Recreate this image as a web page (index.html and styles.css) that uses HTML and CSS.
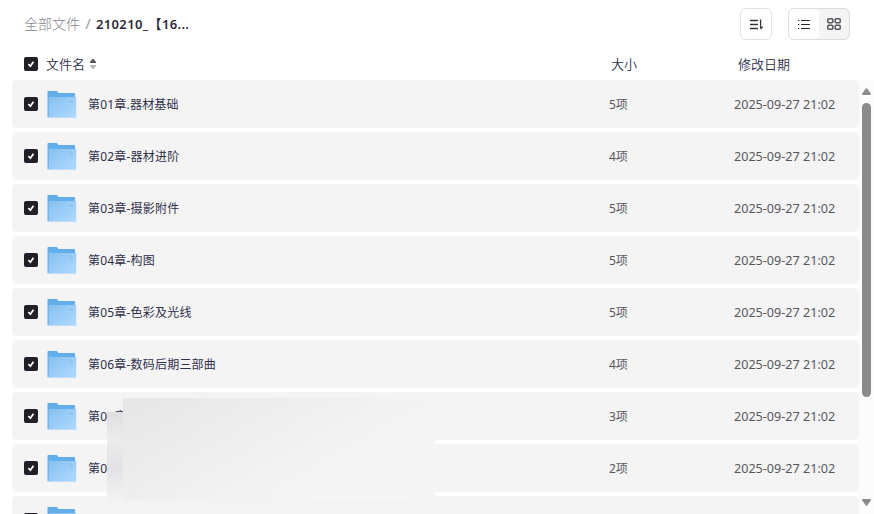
FILE: index.html
```html
<!DOCTYPE html>
<html lang="zh-CN">
<head>
<meta charset="utf-8">
<title>全部文件</title>
<link rel="stylesheet" href="styles.css">
</head>
<body>
<svg class="defs" aria-hidden="true">
  <defs>
    <linearGradient id="front" x1="0" y1="0" x2="1" y2="1"><stop offset="0" stop-color="#86c0f1"/><stop offset=".5" stop-color="#9bcdf7"/><stop offset="1" stop-color="#afd9fc"/></linearGradient>
    <symbol id="folder" viewBox="0 0 30 28">
      <path d="M.5 1.8Q.5 1 1.3 1H9.5Q10.3 1 10.8 2L11.3 3H27.2Q28 3 28 3.8V27H.5Z" fill="#62aeeb"/>
      <path d="M1.7 7H29.2V27.5H1.7Z" fill="url(#front)"/>
      <path d="M.5 27.4H29" stroke="#b5dafa" stroke-width=".8"/>
      <path d="M22.5 11.8H26" stroke="#83bff0" stroke-width="1.5"/>
    </symbol>
    <symbol id="check" viewBox="0 0 14 14">
      <path d="M4.4 7.1 6.4 9.1 9.5 4.7" fill="none" stroke="#fff" stroke-width="1.7"/>
    </symbol>
  </defs>
</svg>
<div class="app">
  <header class="toolbar">
    <nav class="crumbs"><span class="root">全部文件</span><span class="slash">/</span><span class="current">210210_【16...</span></nav>
    <div class="actions">
      <button class="sort" aria-label="排序"><svg width="16" height="16" viewBox="0 0 16 16" fill="none" stroke="#35353b" stroke-width="1.3"><path d="M2 4.5H10M2 8.5H10M2 12.5H10M12.6 3.5V12.8M12.6 12.8 14.8 10.6"/></svg></button>
      <div class="views">
        <button class="view on" aria-label="列表"><svg width="14" height="12" viewBox="0 0 14 12" stroke="#28282e" stroke-width="1.1"><path d="M1 2.5H2.3M4 2.5H13M1 6.5H2.3M4 6.5H13M1 10.5H2.3M4 10.5H13"/></svg></button>
        <button class="view" aria-label="网格"><svg width="14" height="12" viewBox="0 0 14 12" fill="none" stroke="#55555b" stroke-width="1.5"><rect x=".8" y=".8" width="5" height="4" rx="1"/><rect x="8.2" y=".8" width="5" height="4" rx="1"/><rect x=".8" y="7.2" width="5" height="4" rx="1"/><rect x="8.2" y="7.2" width="5" height="4" rx="1"/></svg></button>
      </div>
    </div>
  </header>
  <div class="head">
    <span class="box"><svg><use href="#check"/></svg></span>
    <span class="label">文件名<svg class="order" width="8" height="12" viewBox="0 0 8 12"><path d="M1 5V4L3.5 1H4.5L7 4V5Z" fill="#55555b"/><path d="M1 7H7V8L4.5 11H3.5L1 8Z" fill="#b5b5b8"/></svg></span>
    <span class="hsize">大小</span><span class="hdate">修改日期</span>
  </div>
  <div class="body">
    <main class="list">
      <div class="row"><span class="box"><svg><use href="#check"/></svg></span><svg class="folder"><use href="#folder"/></svg><span class="name">第01章.器材基础</span><span class="size">5项</span><span class="date">2025-09-27 21:02</span></div>
      <div class="row"><span class="box"><svg><use href="#check"/></svg></span><svg class="folder"><use href="#folder"/></svg><span class="name">第02章-器材进阶</span><span class="size">4项</span><span class="date">2025-09-27 21:02</span></div>
      <div class="row"><span class="box"><svg><use href="#check"/></svg></span><svg class="folder"><use href="#folder"/></svg><span class="name">第03章-摄影附件</span><span class="size">5项</span><span class="date">2025-09-27 21:02</span></div>
      <div class="row"><span class="box"><svg><use href="#check"/></svg></span><svg class="folder"><use href="#folder"/></svg><span class="name">第04章-构图</span><span class="size">5项</span><span class="date">2025-09-27 21:02</span></div>
      <div class="row"><span class="box"><svg><use href="#check"/></svg></span><svg class="folder"><use href="#folder"/></svg><span class="name">第05章-色彩及光线</span><span class="size">5项</span><span class="date">2025-09-27 21:02</span></div>
      <div class="row"><span class="box"><svg><use href="#check"/></svg></span><svg class="folder"><use href="#folder"/></svg><span class="name">第06章-数码后期三部曲</span><span class="size">4项</span><span class="date">2025-09-27 21:02</span></div>
      <div class="row"><span class="box"><svg><use href="#check"/></svg></span><svg class="folder"><use href="#folder"/></svg><span class="name">第07章</span><span class="size">3项</span><span class="date">2025-09-27 21:02</span></div>
      <div class="row"><span class="box"><svg><use href="#check"/></svg></span><svg class="folder"><use href="#folder"/></svg><span class="name">第0</span><span class="size">2项</span><span class="date">2025-09-27 21:02</span></div>
      <div class="row"><span class="box"><svg><use href="#check"/></svg></span><svg class="folder"><use href="#folder"/></svg></div>
    </main>
    <div class="scroll">
      <svg width="9" height="7" viewBox="0 0 9 7"><path d="M3.7.7Q4.5-.3 5.3.7L8.8 5.5Q9 7 8 7H1Q0 7 .2 5.5Z" fill="#8b8b8b"/></svg>
      <div class="thumb"></div>
      <svg class="down" width="9" height="7" viewBox="0 0 9 7"><path d="M3.7 6.3Q4.5 7.3 5.3 6.3L8.8 1.5Q9 0 8 0H1Q0 0 .2 1.5Z" fill="#8b8b8b"/></svg>
    </div>
  </div>
  <div class="mask back"></div>
  <div class="mask front"></div>
</div>
</body>
</html>
```
FILE: styles.css
```css
* { box-sizing: border-box; }
body {
  margin: 0;
  background: #fff;
  color: #30304a;
  font-family: "Noto Sans", "Noto Sans CJK SC", sans-serif;
  overflow: hidden;
}
.defs { position: absolute; width: 0; height: 0; }
.app {
  position: relative;
  display: flex;
  flex-direction: column;
  width: 874px;
  height: 514px;
  overflow: hidden;
}
.toolbar {
  flex: none;
  display: flex;
  justify-content: space-between;
  height: 48px;
  padding: 8px 24px 0;
}
.crumbs {
  display: flex;
  height: 32px;
  font-size: 14px;
  line-height: 32px;
  white-space: nowrap;
}
.root { width: 56px; color: #85858c; font-weight: 300; }
.slash { width: 16px; text-align: center; color: #96969c; }
.current { font-size: 13px; font-weight: 600; letter-spacing: .35px; color: #2b2b3b; }
.actions { display: flex; gap: 16px; }
button { padding: 0; border: 0; background: none; }
button svg { display: block; }
.sort {
  display: grid;
  place-items: center;
  width: 32px;
  height: 32px;
  border: 1px solid #e3e3e5;
  border-radius: 6px;
}
.views {
  display: flex;
  width: 62px;
  height: 32px;
  border: 1px solid #dcdcde;
  border-radius: 6px;
  background: #f4f4f5;
  overflow: hidden;
}
.view { display: grid; place-items: center; width: 30px; height: 30px; }
.view.on { background: #fff; border-radius: 5px; }
.head {
  flex: none;
  display: flex;
  align-items: center;
  height: 32px;
  padding-left: 24px;
  font-size: 13px;
  font-weight: 350;
  line-height: 20px;
}
.box {
  flex: none;
  width: 14px;
  height: 14px;
  border-radius: 2px;
  background: #202027;
}
.box svg { display: block; width: 14px; height: 14px; }
.label { display: flex; align-items: center; gap: 4px; width: 565px; margin-left: 8px; }
.hsize { width: 127px; }
.body { flex: none; display: flex; height: 434px; padding-left: 12px; }
.list { display: flex; flex-direction: column; gap: 4px; width: 847px; height: 434px; overflow: hidden; }
.row {
  flex: none;
  display: flex;
  align-items: center;
  height: 48px;
  padding-left: 12px;
  border-radius: 5px;
  background: #f4f4f4;
  font-size: 12px;
  line-height: 20px;
  white-space: nowrap;
}
.folder { flex: none; width: 30px; height: 28px; margin-left: 9px; }
.name, .size { padding-top: 2px; }
.name { width: 521px; margin-left: 11px; letter-spacing: .2px; }
.size { width: 125px; color: #57575d; }
.date { padding-top: 1px; color: #57575d; font-size: 12.6px; }
.scroll {
  display: flex;
  flex-direction: column;
  align-items: center;
  width: 15px;
  padding-top: 8px;
  background: #fcfcfc;
}
.scroll svg { flex: none; }
.thumb { width: 9px; height: 294px; margin-top: 8px; border-radius: 5px; background: #8b8b8b; }
.down { margin-top: 102px; }
.mask { position: absolute; }
.back {
  left: 107px;
  top: 412px;
  width: 300px;
  height: 100px;
  background: linear-gradient(#dfdfe0 0, #ececec 28px, #e3e3e6 55px, #eeeeef 78px, #f3f3f4 90px, #f5f5f5);
}
.front {
  left: 123px;
  top: 398px;
  width: 313px;
  height: 102px;
  background: linear-gradient(150deg, #e6e6e6 0, #ededee 32%, #f3f3f3 60%, #f5f5f5 78%);
}
```
